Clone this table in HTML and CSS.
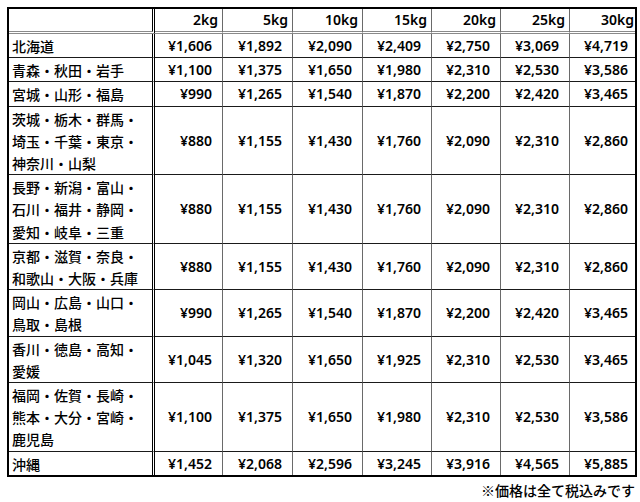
FILE: index.html
```html
<!DOCTYPE html>
<html lang="ja">
<head>
<meta charset="utf-8">
<link rel="stylesheet" href="styles.css">
</head>
<body>
<div class="sheet">
<table class="rates">
<thead>
<tr>
<th class="area c0"></th>
<th class="c1">2kg</th>
<th class="c2">5kg</th>
<th class="c3">10kg</th>
<th class="c4">15kg</th>
<th class="c5">20kg</th>
<th class="c6">25kg</th>
<th class="c7 last">30kg</th>
</tr>
</thead>
<tbody>
<tr><td class="area">北海道</td><td>¥1,606</td><td>¥1,892</td><td>¥2,090</td><td>¥2,409</td><td>¥2,750</td><td>¥3,069</td><td class="last">¥4,719</td></tr>
<tr><td class="area">青森・秋田・岩手</td><td>¥1,100</td><td>¥1,375</td><td>¥1,650</td><td>¥1,980</td><td>¥2,310</td><td>¥2,530</td><td class="last">¥3,586</td></tr>
<tr><td class="area">宮城・山形・福島</td><td>¥990</td><td>¥1,265</td><td>¥1,540</td><td>¥1,870</td><td>¥2,200</td><td>¥2,420</td><td class="last">¥3,465</td></tr>
<tr><td class="area">茨城・栃木・群馬・<br>埼玉・千葉・東京・<br>神奈川・山梨</td><td>¥880</td><td>¥1,155</td><td>¥1,430</td><td>¥1,760</td><td>¥2,090</td><td>¥2,310</td><td class="last">¥2,860</td></tr>
<tr><td class="area">長野・新潟・富山・<br>石川・福井・静岡・<br>愛知・岐阜・三重</td><td>¥880</td><td>¥1,155</td><td>¥1,430</td><td>¥1,760</td><td>¥2,090</td><td>¥2,310</td><td class="last">¥2,860</td></tr>
<tr><td class="area">京都・滋賀・奈良・<br>和歌山・大阪・兵庫</td><td>¥880</td><td>¥1,155</td><td>¥1,430</td><td>¥1,760</td><td>¥2,090</td><td>¥2,310</td><td class="last">¥2,860</td></tr>
<tr><td class="area">岡山・広島・山口・<br>鳥取・島根</td><td>¥990</td><td>¥1,265</td><td>¥1,540</td><td>¥1,870</td><td>¥2,200</td><td>¥2,420</td><td class="last">¥3,465</td></tr>
<tr><td class="area">香川・徳島・高知・<br>愛媛</td><td>¥1,045</td><td>¥1,320</td><td>¥1,650</td><td>¥1,925</td><td>¥2,310</td><td>¥2,530</td><td class="last">¥3,465</td></tr>
<tr><td class="area">福岡・佐賀・長崎・<br>熊本・大分・宮崎・<br>鹿児島</td><td>¥1,100</td><td>¥1,375</td><td>¥1,650</td><td>¥1,980</td><td>¥2,310</td><td>¥2,530</td><td class="last">¥3,586</td></tr>
<tr class="end"><td class="area">沖縄</td><td>¥1,452</td><td>¥2,068</td><td>¥2,596</td><td>¥3,245</td><td>¥3,916</td><td>¥4,565</td><td class="last">¥5,885</td></tr>
</tbody>
</table>
<p class="note">※価格は全て税込みです</p>
</div>
</body>
</html>
```

FILE: styles.css
```css
html, body {
  margin: 0;
  padding: 0;
  background: #fff;
}

body {
  font-family: "Noto Sans", "Noto Sans CJK JP", sans-serif;
  color: #000;
  font-size: 14px;
  font-weight: 600;
}

.sheet {
  padding: 7px 0 0 7px;
  width: 630px;
}

.rates {
  width: 630px;
  box-sizing: border-box;
  table-layout: fixed;
  border-collapse: separate;
  border-spacing: 0;
  border: 2px solid #000;
}

.rates th,
.rates td {
  box-sizing: border-box;
  padding: 1px 10px 0 0;
  line-height: 22.2px;
  text-align: right;
  vertical-align: middle;
  white-space: nowrap;
  border-right: 1px solid #6a6a6a;
  border-bottom: 1px solid #1a1a1a;
  font-weight: 600;
}

.rates th {
  padding: 0 4px 0 0;
  line-height: 22px;
  border-bottom: 3px double #8a8a8a;
}

.rates .area {
  text-align: left;
  padding-left: 3px;
  padding-right: 0;
  font-family: "Noto Sans CJK JP", sans-serif;
  font-weight: 500;
  border-right: 3px double #000;
}

.rates .last {
  border-right: none;
  padding-right: 7px;
}

.rates th.last {
  padding-right: 1px;
}

.rates tr.end td {
  border-bottom: none;
}

.c0 { width: 146px; }
.c1 { width: 68px; }
.c2 { width: 70px; }
.c3 { width: 70px; }
.c4 { width: 69px; }
.c5 { width: 69px; }
.c6 { width: 69px; }
.c7 { width: 65px; }

.note {
  margin: 3px 0 0;
  padding-right: 2px;
  text-align: right;
  line-height: 20px;
  font-family: "Noto Sans CJK JP", sans-serif;
  font-weight: 500;
  font-size: 14px;
}
```
